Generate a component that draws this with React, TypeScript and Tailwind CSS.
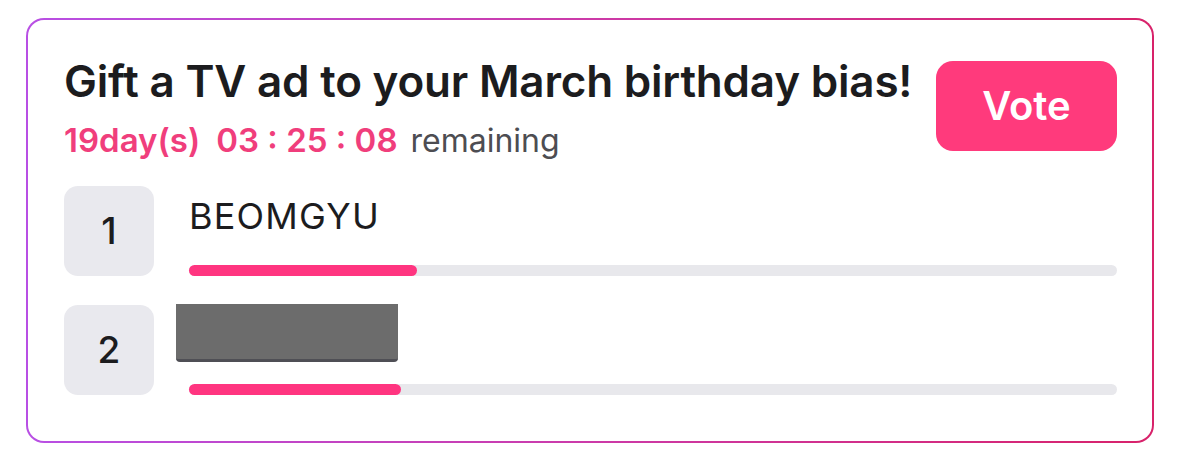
import React from 'react'

type Entry = {
  rank: number
  name: string | null
  pct: number
}

const entries: Entry[] = [
  { rank: 1, name: 'BEOMGYU', pct: 24.6 },
  { rank: 2, name: null, pct: 22.8 },
]

function RankRow({ entry }: { entry: Entry }) {
  return (
    <div className="flex items-stretch gap-[35px]">
      <div className="flex h-[90px] w-[90px] shrink-0 items-center justify-center rounded-[14px] bg-[#e9e9ee] text-[37px] font-medium text-[#1c1c1e]">
        {entry.rank}
      </div>
      <div className="flex h-[90px] flex-1 flex-col justify-between">
        {entry.name ? (
          <div className="pt-[10px] text-[36px] leading-[40px] tracking-[1.2px] text-[#1c1c1e]">{entry.name}</div>
        ) : (
          <div className="-mt-px ml-[-13px] h-[58px] w-[222px] rounded-b-[4px] border-b-[3px] border-[#4f4f55] bg-[#6c6c6c]" />
        )}
        <div className="h-[11px] w-full rounded-full bg-[#e8e8ec]">
          <div className="h-full rounded-full bg-[#ff3580]" style={{ width: `${entry.pct}%` }} />
        </div>
      </div>
    </div>
  )
}

export default function App() {
  return (
    <div className="h-[460px] w-[1200px] bg-white pt-[18px] pl-[26px] font-['Inter','Liberation_Sans',sans-serif]">
      <div className="h-[425px] w-[1128px] rounded-[18px] bg-[linear-gradient(90deg,#b84fe4_0%,#cc3aa8_50%,#d8226a_100%)] p-[2px]">
        <div className="flex h-full flex-col rounded-[16px] bg-white pl-[36px] pr-[35px]">
          <div className="flex items-start justify-between pt-[35px]">
            <div className="flex flex-col">
              <h1 className="text-[44px] font-semibold leading-[52px] tracking-[-0.2px] text-[#1c1c1e]">
                Gift a TV ad to your March birthday bias!
              </h1>
              <div className="mt-[13px] flex items-baseline text-[33px] leading-[40px]">
                <span className="font-semibold text-[#f03e7c]">19day(s)</span>
                <span className="ml-[16px] font-semibold text-[#f03e7c]">03 : 25 : 08</span>
                <span className="ml-[13px] text-[32px] text-[#4d4d52]">remaining</span>
              </div>
            </div>
            <button
              type="button"
              className="mt-[6px] flex h-[90px] w-[181px] items-center justify-center rounded-[17px] bg-[#ff3a7c] text-[40px] font-semibold text-white"
            >
              Vote
            </button>
          </div>
          <div className="mt-[25px] flex flex-col gap-[29px]">
            {entries.map((entry) => (
              <RankRow key={entry.rank} entry={entry} />
            ))}
          </div>
        </div>
      </div>
    </div>
  )
}
